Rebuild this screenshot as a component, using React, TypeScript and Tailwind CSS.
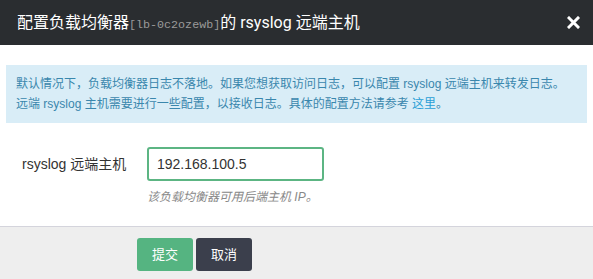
import { useState } from 'react';

const font = { fontFamily: '"Liberation Sans", "Noto Sans CJK SC", sans-serif' };

const App = () => {
    const [host, setHost] = useState('192.168.100.5');

    return (
        <div className="w-[593px] h-[279px] bg-white flex flex-col overflow-hidden" style={font}>
            {/* Header */}
            <div className="h-[45px] bg-[#2a2d30] flex items-center justify-between pl-[17px] pr-[10px]">
                <div className="flex items-baseline text-white text-[16px] font-['Roboto','Noto_Sans_CJK_SC',sans-serif]">
                    <span>配置负载均衡器</span>
                    <span className="text-[11.7px] text-[#9a9a9a] font-['Liberation_Mono',monospace]">[lb-0c2ozewb]</span>
                    <span>的 rsyslog 远端主机</span>
                </div>
                <button className="w-[20px] h-[20px] flex items-center justify-center text-white">
                    <svg width="13" height="13" viewBox="0 0 13 13">
                        <path d="M2 2 L11 11 M11 2 L2 11" stroke="white" strokeWidth="3" strokeLinecap="square" />
                    </svg>
                </button>
            </div>

            {/* Body */}
            <div className="flex-1 pt-[20px] px-[6px]">
                <div className="bg-[#d9edf7] text-[#3a87ad] text-[12px] leading-[20px] px-[10px] pt-[9px] pb-[9px]">
                    <p>默认情况下，负载均衡器日志不落地。如果您想获取访问日志，可以配置 rsyslog 远端主机来转发日志。</p>
                    <p>
                        远端 rsyslog 主机需要进行一些配置，以接收日志。具体的配置方法请参考 <a className="text-[#2a9fd6]">这里</a>。
                    </p>
                </div>

                <div className="flex items-start mt-[24px]">
                    <label className="w-[141px] pl-[16px] text-[14px] text-[#333] leading-[34px]">rsyslog 远端主机</label>
                    <div className="flex flex-col">
                        <input
                            value={host}
                            onChange={e => setHost(e.target.value)}
                            className="w-[177px] h-[34px] border-2 border-[#5cb583] rounded-[3px] px-[8px] text-[14px] text-[#333] outline-none"
                        />
                        <p className="mt-[7px] text-[12px] italic text-[#888]">该负载均衡器可用后端主机 IP。</p>
                    </div>
                </div>
            </div>

            {/* Footer */}
            <div className="h-[53px] bg-[#eeeeee] border-t border-[#d4d4dc] flex items-start pt-[11px] pl-[137px] gap-[3px]">
                <button className="w-[56px] h-[33px] rounded-[3px] bg-[#55b481] text-white text-[13px]">提交</button>
                <button className="w-[56px] h-[33px] rounded-[3px] bg-[#3b3f4c] text-white text-[13px]">取消</button>
            </div>
        </div>
    );
};

export default App;
